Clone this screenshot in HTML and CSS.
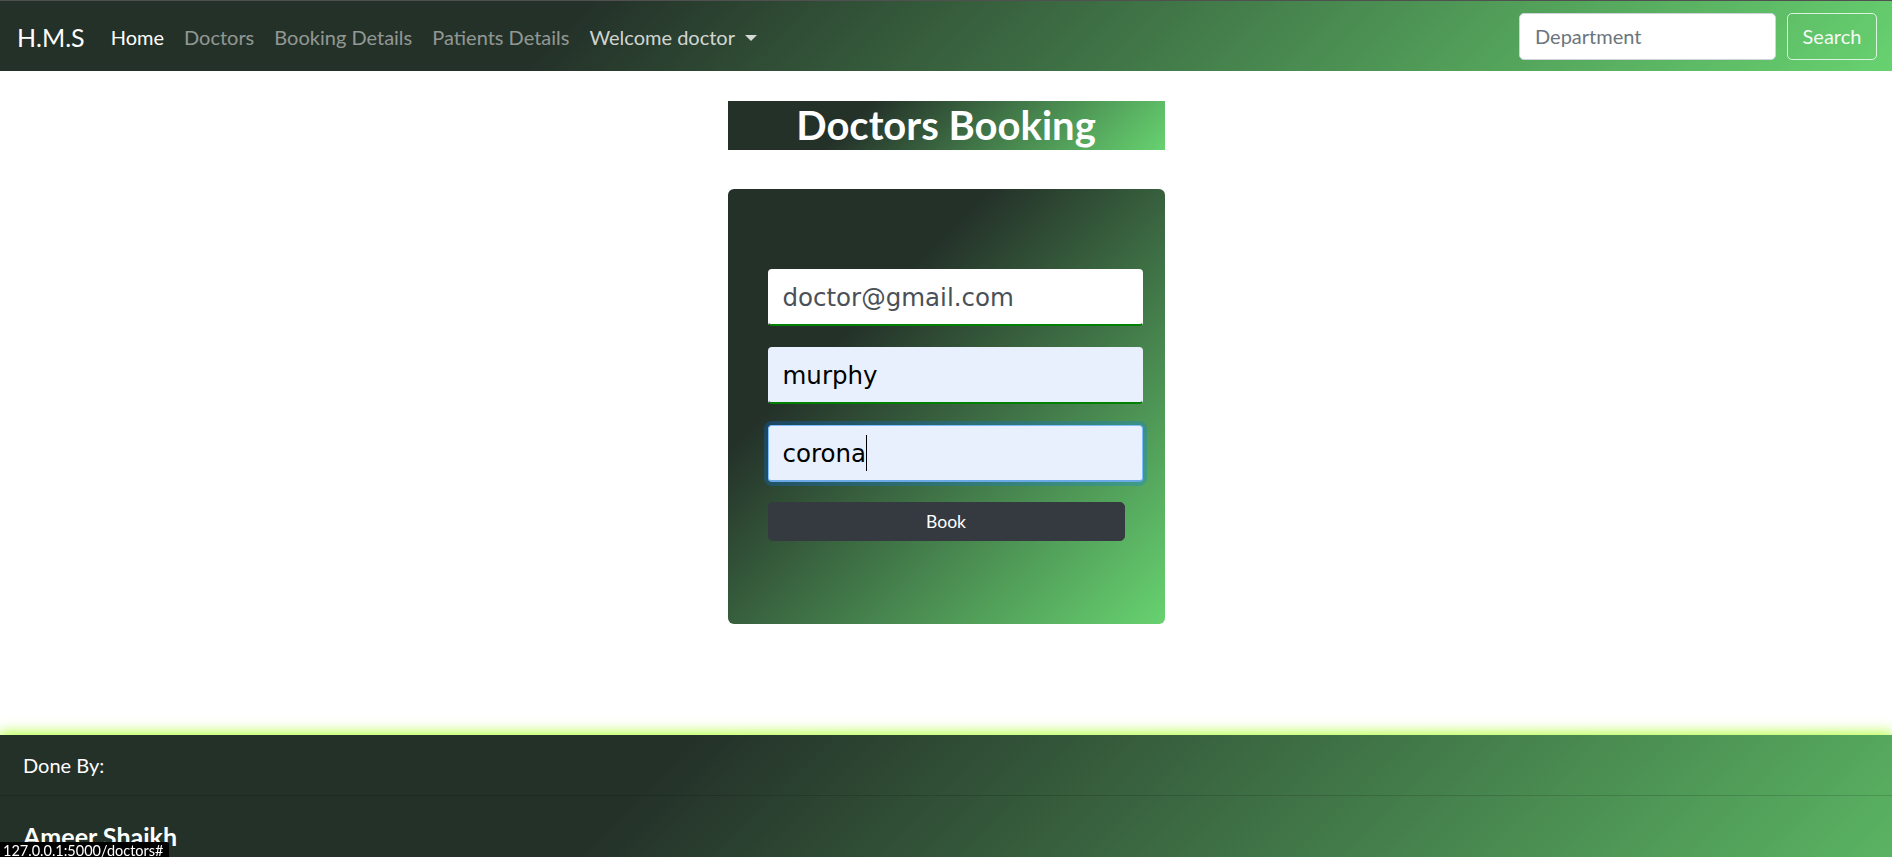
FILE: index.html
```html
<!DOCTYPE html>
<html lang="en">
<head>
<meta charset="utf-8">
<title>H.M.S - Doctors Booking</title>
<link rel="stylesheet" href="styles.css">
</head>
<body>
<nav class="navbar">
  <a class="brand" href="#">H.M.S</a>
  <ul class="nav-links">
    <li><a class="nav-link active" href="#">Home</a></li>
    <li><a class="nav-link" href="#">Doctors</a></li>
    <li><a class="nav-link" href="#">Booking Details</a></li>
    <li><a class="nav-link" href="#">Patients Details</a></li>
    <li><a class="nav-link welcome dropdown-toggle" href="#">Welcome doctor</a></li>
  </ul>
  <form class="search-form">
    <input class="search-input" type="search" placeholder="Department">
    <button class="search-btn" type="button">Search</button>
  </form>
</nav>

<main class="main">
  <h2 class="page-title">Doctors Booking</h2>
  <form class="booking-card">
    <input class="field field-email" type="email" value="doctor@gmail.com" readonly>
    <input class="field field-filled" type="text" value="murphy">
    <div class="field-wrap">
      <input class="field field-filled field-focus" type="text" value="corona">
      <span class="caret" aria-hidden="true">corona</span>
    </div>
    <button class="book-btn" type="button">Book</button>
  </form>
</main>

<footer class="footer">
  <div class="footer-header">Done By:</div>
  <div class="footer-body">
    <h5 class="footer-name">Ameer Shaikh</h5>
  </div>
</footer>

<div class="status-bar">127.0.0.1:5000/doctors#</div>
</body>
</html>
```

FILE: styles.css
```css
* {
  box-sizing: border-box;
}

html, body {
  margin: 0;
  padding: 0;
}

body {
  font-family: "Segoe UI", Lato, "Noto Sans", sans-serif;
  background: #fff;
  color: #212529;
  overflow: hidden;
}

/* ---------- Navbar ---------- */
.navbar {
  display: flex;
  align-items: center;
  height: 71px;
  padding: 0 15px 0 17px;
  border-top: 1px solid #505050;
  background: linear-gradient(135deg, #243129 30%, #67d270);
}

.brand {
  color: #fff;
  font-size: 25px;
  line-height: 37px;
  text-decoration: none;
  margin-right: 16px;
  padding-top: 2px;
}

.nav-links {
  display: flex;
  list-style: none;
  margin: 0;
  padding: 0;
}

.nav-link {
  display: block;
  padding: 2px 10px 0;
  font-size: 20px;
  line-height: 30px;
  color: rgba(255, 255, 255, 0.5);
  text-decoration: none;
}

.nav-link.active {
  color: #fff;
}

.nav-link.welcome {
  color: rgba(255, 255, 255, 0.8);
}

.dropdown-toggle::after {
  content: "";
  display: inline-block;
  margin-left: 10px;
  vertical-align: 4px;
  border-top: 6px solid rgba(255, 255, 255, 0.8);
  border-left: 6px solid transparent;
  border-right: 6px solid transparent;
}

.search-form {
  display: flex;
  align-items: center;
  margin: 0 0 0 auto;
}

.search-input {
  width: 257px;
  height: 47px;
  padding: 0 15px;
  font-family: inherit;
  font-size: 20px;
  color: #495057;
  background: #fff;
  border: 1px solid #ced4da;
  border-radius: 5px;
  outline: none;
}

.search-input::placeholder {
  color: #6c757d;
}

.search-btn {
  width: 90px;
  height: 47px;
  margin-left: 11px;
  padding: 0;
  font-family: inherit;
  font-size: 20px;
  color: #f4fbf4;
  background: transparent;
  border: 1px solid rgba(240, 250, 240, 0.85);
  border-radius: 5px;
}

/* ---------- Main ---------- */
.main {
  display: flex;
  flex-direction: column;
  align-items: center;
  padding-top: 30px;
}

.page-title {
  width: 437px;
  height: 49px;
  margin: 0;
  font-size: 40px;
  font-weight: 700;
  line-height: 48px;
  text-align: center;
  color: #fff;
  background: linear-gradient(135deg, #243129 30%, #67d270);
}

.booking-card {
  width: 437px;
  height: 435px;
  margin: 39px 0 0;
  padding: 80px 22px 0 40px;
  border-radius: 6px;
  background: linear-gradient(135deg, #243129 30%, #67d270);
}

.field {
  display: block;
  width: 375px;
  height: 57px;
  margin: 0 0 21px;
  padding: 0 14px;
  font-family: "Comic Sans MS", "DejaVu Sans", sans-serif;
  font-size: 24.5px;
  border: 1px solid transparent;
  border-bottom: 2px solid #008000;
  border-radius: 4px;
  outline: none;
}

.field-email {
  background: #fff;
  color: #495057;
}

.field-filled {
  background: #e8f0fe;
  color: #000;
}

.field-focus {
  margin-bottom: 0;
  border-color: #80bdff;
  border-bottom-color: #6aa8e6;
  box-shadow: 0 0 0 4px rgba(0, 123, 255, 0.25);
}

.field-wrap {
  position: relative;
  margin-top: 1px;
  margin-bottom: 20px;
}

.caret {
  position: absolute;
  left: 15px;
  top: 10px;
  height: 36px;
  font-family: "Comic Sans MS", "DejaVu Sans", sans-serif;
  font-size: 24.5px;
  line-height: 36px;
  color: transparent;
  border-right: 1.5px solid #000;
  pointer-events: none;
}

.book-btn {
  display: block;
  width: 357px;
  height: 39px;
  padding: 0;
  font-family: inherit;
  font-size: 17.5px;
  color: #fff;
  background: #343a40;
  border: 1px solid #343a40;
  border-radius: 5px;
}

/* ---------- Footer ---------- */
.footer {
  height: 122px;
  margin-top: 111px;
  color: #fff;
  background-color: #243129;
  background-image: linear-gradient(135deg, #243129 30%, #67d270);
  background-size: 100% 430px;
  background-repeat: no-repeat;
  box-shadow: 0 -2px 12px 1px #b6ff4a;
}

.footer-header {
  padding: 15px 23px;
  font-size: 20px;
  line-height: 30px;
  border-bottom: 1px solid rgba(0, 0, 0, 0.14);
}

.footer-body {
  padding: 25px 23px 0;
}

.footer-name {
  margin: 0;
  font-size: 25px;
  font-weight: 700;
  line-height: 30px;
}

/* ---------- Browser status bar ---------- */
.status-bar {
  position: fixed;
  left: 0;
  bottom: 0;
  height: 15px;
  padding: 0 6px 0 3px;
  font-size: 14.5px;
  line-height: 17px;
  color: #fff;
  background: #000;
  overflow: hidden;
  border-top-right-radius: 2px;
}
```
